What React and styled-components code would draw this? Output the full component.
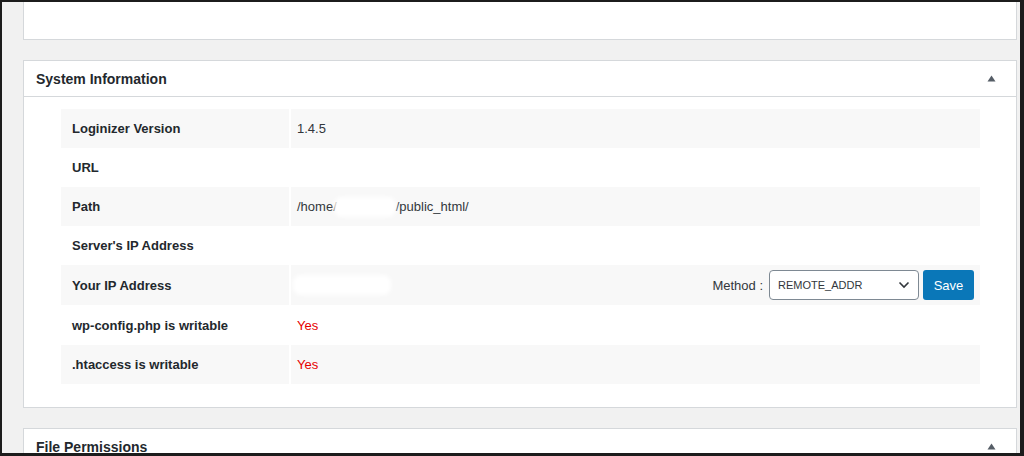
import React from 'react'
import styled, { createGlobalStyle } from 'styled-components'

const GlobalStyle = createGlobalStyle`
  html, body {
    margin: 0;
    padding: 0;
    background: #f1f1f1;
  }
  * {
    box-sizing: border-box;
  }
`

const Frame = styled.div`
  width: 1024px;
  height: 456px;
  overflow: hidden;
  background: #f1f1f1;
  border-style: solid;
  border-color: #1c1c1c;
  border-width: 2px 4px 3px 2px;
  padding: 0 3px 0 21px;
  display: flex;
  flex-direction: column;
  gap: 20px;
  font-family: 'Liberation Sans', Arial, sans-serif;
`

const Panel = styled.div`
  flex-shrink: 0;
  background: #fff;
  border: 1px solid #d5d8db;
  ${({ $cut }) => $cut && 'border-top: 0; height: 38px;'}
`

const PanelHeader = styled.div`
  height: 36px;
  display: flex;
  align-items: center;
  justify-content: space-between;
  padding: 0 20px 0 12px;
  border-bottom: 1px solid #d5d8db;
`

const PanelTitle = styled.h2`
  margin: 0;
  font-size: 14px;
  font-weight: 700;
  color: #23282d;
`

const PanelBody = styled.div`
  padding: 12px 36px 23px 37px;
`

const Table = styled.div`
  display: flex;
  flex-direction: column;
`

const Row = styled.div`
  display: grid;
  grid-template-columns: 228px 1fr;
  column-gap: 2px;
  height: ${({ $h }) => $h || 39}px;
`

const Cell = styled.div`
  display: flex;
  align-items: center;
  background: ${({ $striped }) => ($striped ? '#f8f8f8' : '#fff')};
  font-size: 13px;
  color: #32373c;
`

const Label = styled(Cell)`
  padding-left: 11px;
  font-weight: 700;
  color: #23282d;
`

const Value = styled(Cell)`
  padding-left: 6px;
  padding-right: 6px;
  color: ${({ $alert }) => ($alert ? '#e60000' : '#32373c')};
`

const Redact = styled.span`
  display: inline-block;
  width: ${({ $w }) => $w}px;
  height: 20px;
  margin-left: ${({ $ml }) => $ml || 0}px;
  background: #fff;
  border-radius: 8px;
  filter: blur(2px);
`

const Spacer = styled.div`
  flex: 1;
`

const MethodLabel = styled.span`
  font-size: 13px;
  color: #32373c;
  margin-right: 6px;
`

const Select = styled.div`
  width: 150px;
  height: 30px;
  border: 1px solid #7e8993;
  border-radius: 4px;
  background: #fff;
  display: flex;
  align-items: center;
  justify-content: space-between;
  padding: 0 8px 0 8px;
  font-size: 11px;
  color: #32373c;
  margin-right: 4px;
`

const SaveButton = styled.button`
  width: 51px;
  height: 30px;
  border: 0;
  border-radius: 3px;
  background: #0a77b8;
  color: #fff;
  font-family: inherit;
  font-size: 13px;
  padding: 0;
`

const Toggle = styled.svg`
  width: 9px;
  height: 7px;
`

const Arrow = () => (
  <Toggle viewBox="0 0 9 7">
    <path d="M4.5 0.5 L8.5 6.5 L0.5 6.5 Z" fill="#555d66" />
  </Toggle>
)

const rows = [
  { label: 'Loginizer Version', value: '1.4.5' },
  { label: 'URL', value: '' },
  { label: 'Path', value: 'path' },
  { label: "Server's IP Address", value: '' },
  { label: 'Your IP Address', value: 'ip', h: 40 },
  { label: 'wp-config.php is writable', value: 'Yes', alert: true, h: 40 },
  { label: '.htaccess is writable', value: 'Yes', alert: true },
]

const renderValue = (row) => {
  if (row.value === 'path') {
    return (
      <>
        /home/<Redact $w={62} $ml={-3} />/public_html/
      </>
    )
  }
  if (row.value === 'ip') {
    return (
      <>
        <Redact $w={98} $ml={-4} />
        <Spacer />
        <MethodLabel>Method :</MethodLabel>
        <Select>
          REMOTE_ADDR
          <svg width="12" height="8" viewBox="0 0 12 8">
            <path d="M1.5 1.5 L6 6 L10.5 1.5" fill="none" stroke="#32373c" strokeWidth="1.6" />
          </svg>
        </Select>
        <SaveButton>Save</SaveButton>
      </>
    )
  }
  return row.value
}

const App = () => (
  <>
    <GlobalStyle />
    <Frame>
      <Panel $cut />
      <Panel>
        <PanelHeader>
          <PanelTitle>System Information</PanelTitle>
          <Arrow />
        </PanelHeader>
        <PanelBody>
          <Table>
            {rows.map((row, i) => (
              <Row key={row.label} $h={row.h}>
                <Label $striped={i % 2 === 0}>{row.label}</Label>
                <Value $striped={i % 2 === 0} $alert={row.alert}>
                  {renderValue(row)}
                </Value>
              </Row>
            ))}
          </Table>
        </PanelBody>
      </Panel>
      <Panel>
        <PanelHeader>
          <PanelTitle>File Permissions</PanelTitle>
          <Arrow />
        </PanelHeader>
      </Panel>
    </Frame>
  </>
)

export default App
